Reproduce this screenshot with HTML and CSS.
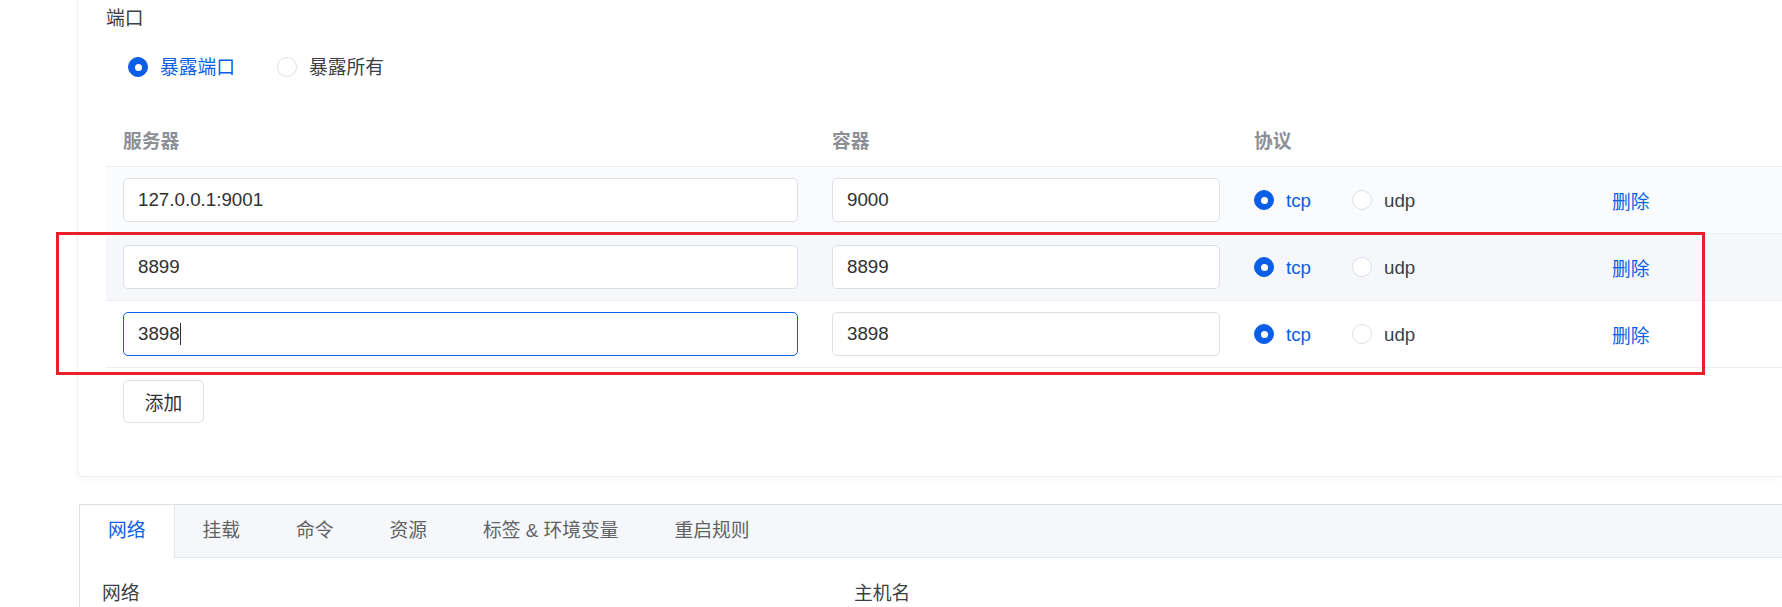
FILE: index.html
```html
<!DOCTYPE html>
<html lang="zh-CN">
<head>
    <meta charset="UTF-8">
    <title>端口设置</title>
    <link rel="stylesheet" href="styles.css">
</head>
<body>
    <main class="page">
        <!-- Ports card -->
        <section class="card">
            <div class="field-label">端口</div>
            <div class="radio-group">
                <label class="radio is-checked"><span class="radio-dot"></span>暴露端口</label>
                <label class="radio"><span class="radio-dot"></span>暴露所有</label>
            </div>

            <div class="port-table">
                <div class="port-row port-head">
                    <div class="cell">服务器</div>
                    <div class="cell">容器</div>
                    <div class="cell">协议</div>
                    <div class="cell"></div>
                </div>
                <div class="port-row row-soft">
                    <div class="cell"><input class="text-input" type="text" value="127.0.0.1:9001"></div>
                    <div class="cell"><input class="text-input" type="text" value="9000"></div>
                    <div class="cell proto">
                        <label class="radio is-checked"><span class="radio-dot"></span>tcp</label>
                        <label class="radio"><span class="radio-dot"></span>udp</label>
                    </div>
                    <div class="cell"><a class="link" href="#">删除</a></div>
                </div>
                <div class="port-row row-hover">
                    <div class="cell"><input class="text-input" type="text" value="8899"></div>
                    <div class="cell"><input class="text-input" type="text" value="8899"></div>
                    <div class="cell proto">
                        <label class="radio is-checked"><span class="radio-dot"></span>tcp</label>
                        <label class="radio"><span class="radio-dot"></span>udp</label>
                    </div>
                    <div class="cell"><a class="link" href="#">删除</a></div>
                </div>
                <div class="port-row">
                    <div class="cell caret-cell">
                        <input class="text-input is-focus" type="text" value="3898">
                        <span class="caret"></span>
                    </div>
                    <div class="cell"><input class="text-input" type="text" value="3898"></div>
                    <div class="cell proto">
                        <label class="radio is-checked"><span class="radio-dot"></span>tcp</label>
                        <label class="radio"><span class="radio-dot"></span>udp</label>
                    </div>
                    <div class="cell"><a class="link" href="#">删除</a></div>
                </div>
            </div>

            <button class="btn" type="button">添加</button>
        </section>

        <!-- Tabs -->
        <section class="tabs">
            <div class="tab-bar">
                <div class="tab is-active">网络</div>
                <div class="tab">挂载</div>
                <div class="tab">命令</div>
                <div class="tab">资源</div>
                <div class="tab">标签 &amp; 环境变量</div>
                <div class="tab">重启规则</div>
            </div>
            <div class="tab-pane">
                <div class="form-col">网络</div>
                <div class="form-col">主机名</div>
            </div>
        </section>
    </main>

    <!-- annotation box -->
    <div class="highlight"></div>
</body>
</html>
```

FILE: styles.css
```css
:root {
    --primary: #0b5ee6;
    --text: #303133;
    --text-muted: #8c9096;
    --border: #dcdfe6;
    --line: #ebeef5;
    --fill: #f5f7fa;
}

html, body {
    margin: 0;
    padding: 0;
    height: 607px;
    overflow: hidden;
    background: #fff;
}

body {
    position: relative;
    font-family: "Liberation Sans", "Noto Sans CJK SC", sans-serif;
    font-size: 18.75px;
    color: var(--text);
}

.page {
    padding-left: 77px;
    width: 1705px;
}

.card {
    margin-top: -20px;
    padding: 25px 0 53px 28px;
    border: 1px solid #eef0f4;
    border-right: none;
    border-radius: 6px 0 0 6px;
    box-shadow: 0 2px 8px rgba(0, 0, 0, 0.03);
}

.field-label {
    line-height: 25px;
    color: #3c3f44;
}

.radio-group {
    display: flex;
    gap: 42px;
    margin: 23px 0 0 22px;
    height: 26px;
    align-items: center;
}

.radio {
    display: inline-flex;
    align-items: center;
    gap: 12px;
    color: #3c3f44;
    line-height: 25px;
    cursor: pointer;
}

.radio-dot {
    box-sizing: border-box;
    width: 20px;
    height: 20px;
    border-radius: 50%;
    border: 1px solid var(--border);
    background: #fff;
    position: relative;
}

.radio.is-checked {
    color: var(--primary);
}

.radio.is-checked .radio-dot {
    background: var(--primary);
    border-color: var(--primary);
}

.radio.is-checked .radio-dot::after {
    content: "";
    position: absolute;
    left: 50%;
    top: 50%;
    width: 7px;
    height: 7px;
    margin: -3.5px 0 0 -3.5px;
    border-radius: 50%;
    background: #fff;
}

.port-table {
    margin-top: 33px;
}

.port-row {
    display: grid;
    grid-template-columns: 709px 422px 358px 1fr;
    height: 66px;
    align-items: center;
    border-bottom: 1px solid var(--line);
}

.port-head {
    height: 53px;
    color: var(--text-muted);
    font-weight: 600;
}

.row-soft {
    background: #fafbfc;
}

.row-hover {
    background: var(--fill);
}

.cell {
    padding: 0 17px;
}

.text-input {
    box-sizing: border-box;
    width: 100%;
    height: 44px;
    padding: 0 14px;
    border: 1px solid var(--border);
    border-radius: 5px;
    background: #fff;
    font: inherit;
    color: var(--text);
    outline: none;
}

.text-input.is-focus {
    border-color: var(--primary);
}

.caret-cell {
    position: relative;
}

.caret {
    position: absolute;
    left: 74px;
    top: 11px;
    width: 1px;
    height: 22px;
    background: #303133;
}

.proto {
    display: flex;
    gap: 41px;
}

.link {
    color: var(--primary);
    text-decoration: none;
}

.btn {
    margin: 12px 0 0 17px;
    width: 81px;
    height: 43px;
    border: 1px solid var(--border);
    border-radius: 5px;
    background: #fff;
    font: inherit;
    color: var(--text);
    cursor: pointer;
}

.tabs {
    margin: 27px 0 0 2px;
    border: 1px solid var(--border);
    border-right: none;
    border-bottom: none;
}

.tab-bar {
    display: flex;
    height: 52px;
    background: var(--fill);
    border-bottom: 1px solid #e4e7ed;
}

.tab {
    padding: 0 28px;
    line-height: 52px;
    color: #606266;
}

.tab.is-active {
    background: #fff;
    color: var(--primary);
    border-right: 1px solid #e4e7ed;
    margin-bottom: -1px;
    height: 53px;
}

.tab-pane {
    display: grid;
    grid-template-columns: 752px 752px;
    padding: 23px 22px;
}

.form-col {
    line-height: 25px;
    color: #3c3f44;
}

.highlight {
    position: absolute;
    left: 56px;
    top: 232px;
    width: 1643px;
    height: 137px;
    border: 3px solid #e8202a;
}
```
